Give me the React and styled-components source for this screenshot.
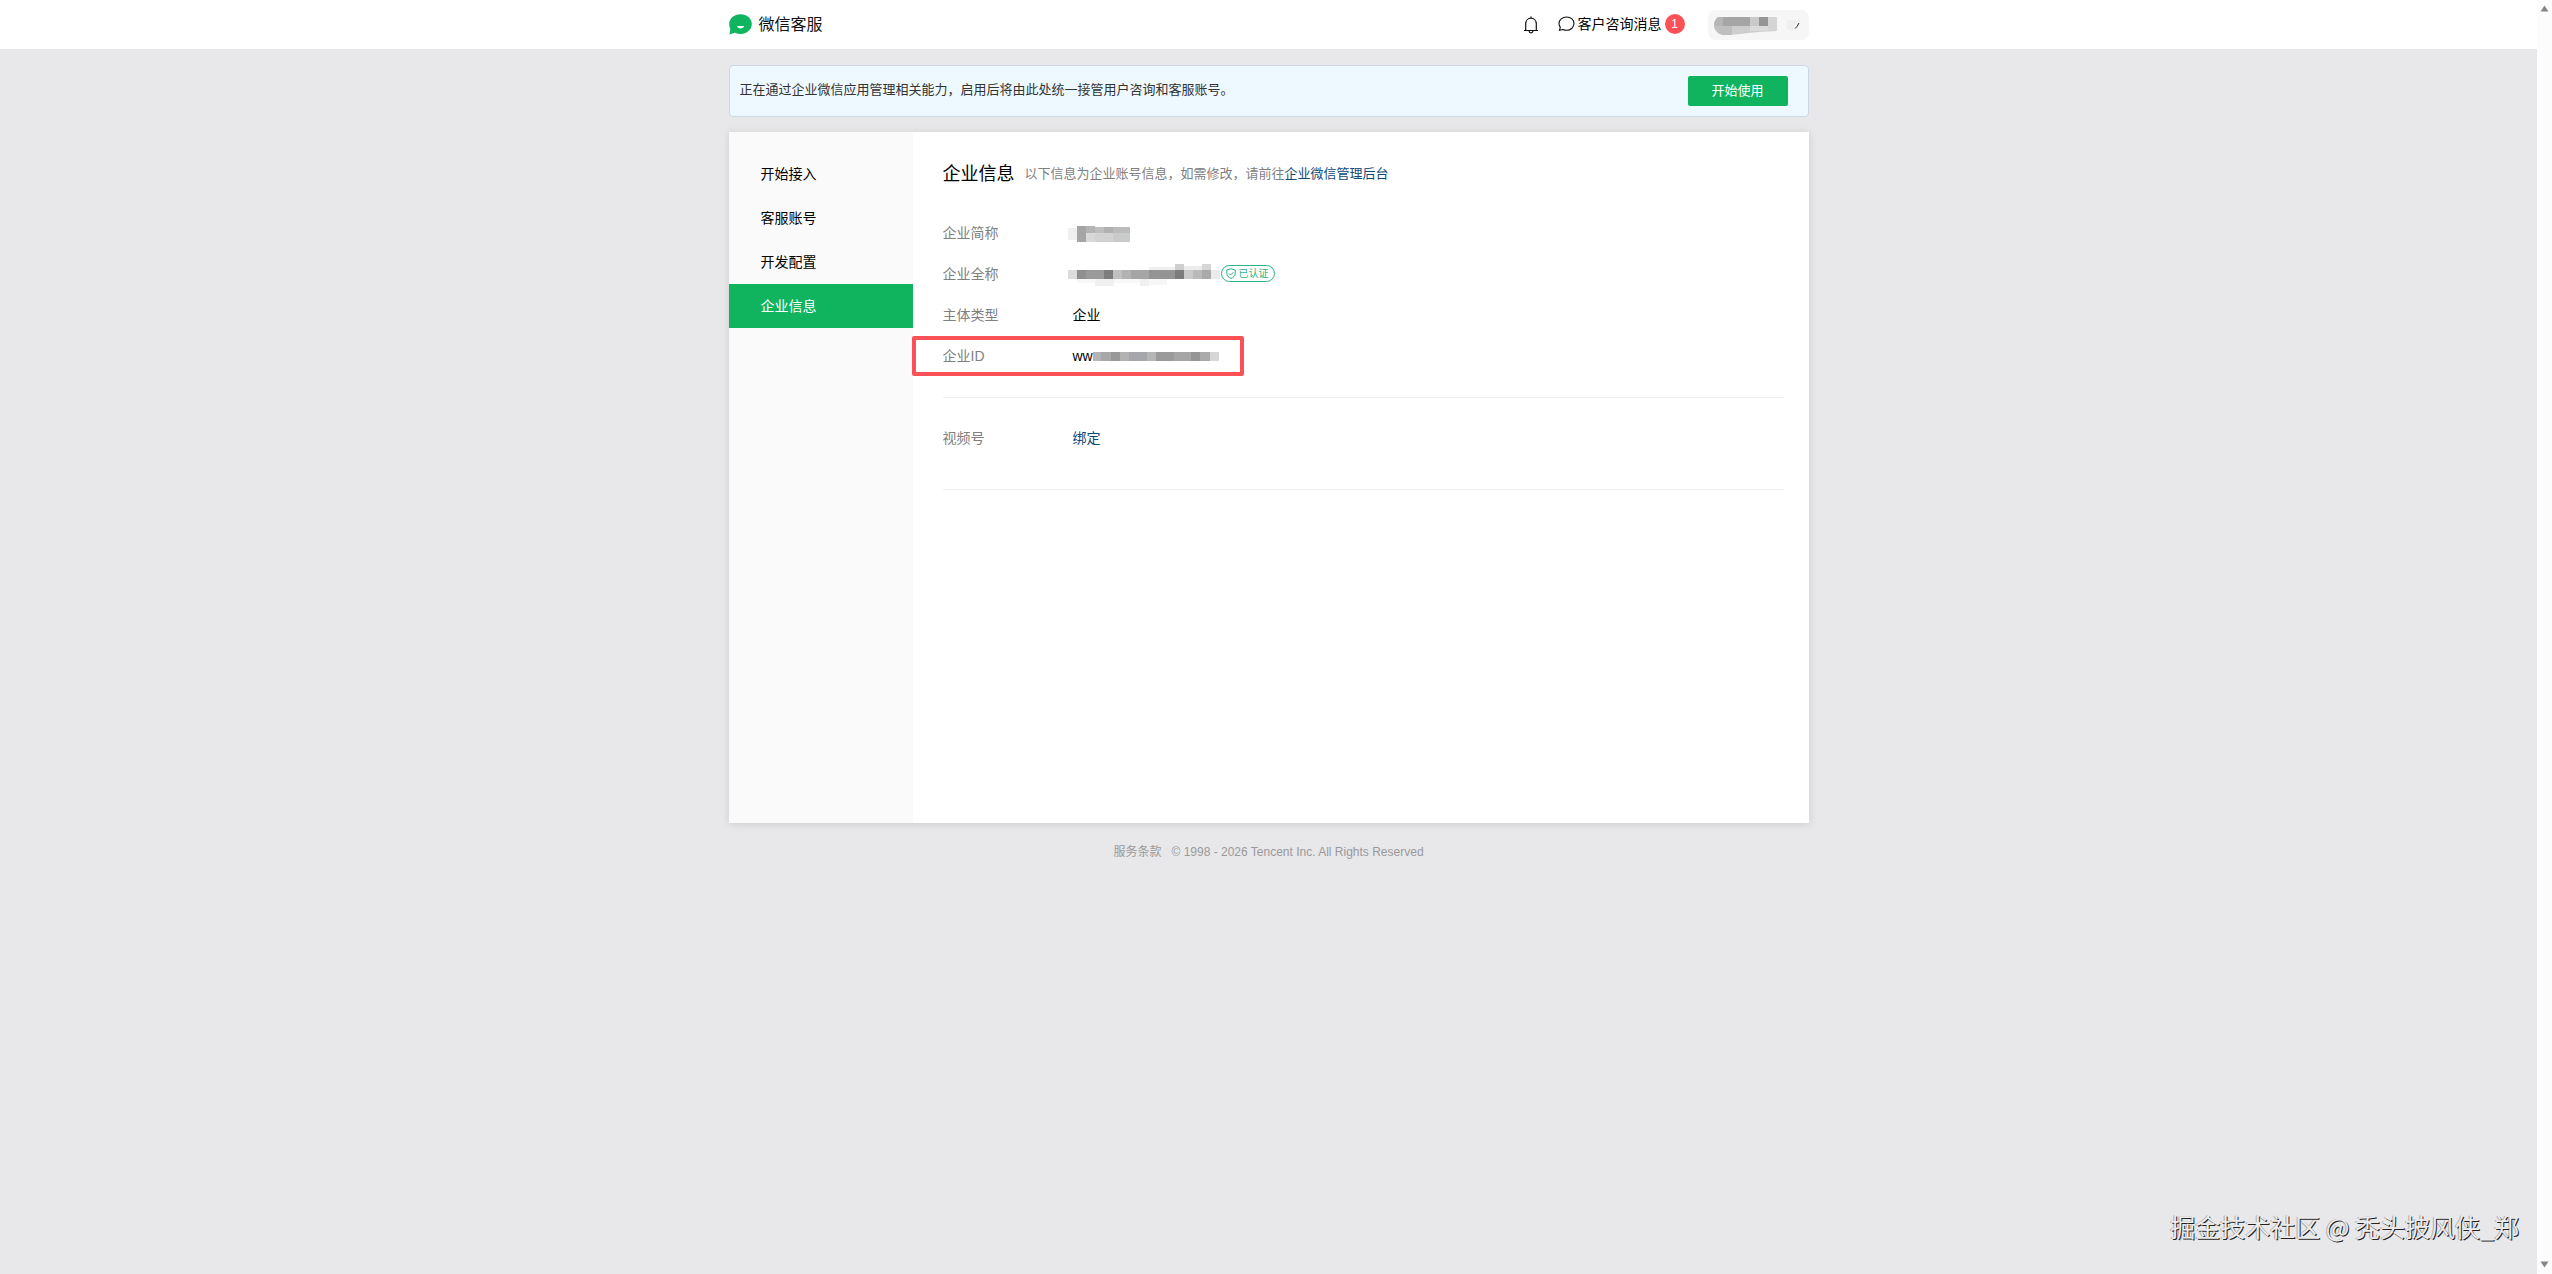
import React from 'react';
import styled, { createGlobalStyle } from 'styled-components';

const GlobalStyle = createGlobalStyle`
  * {
    box-sizing: border-box;
  }

  body {
    margin: 0;
    background-color: #e8e8ea;
    color: #000;
    font-family: 'Liberation Sans', 'Noto Sans CJK SC', sans-serif;
    font-size: 14px;
    line-height: 20px;
  }
`;

const Window = styled.div`
  display: flex;
  min-height: 100vh;
`;

const Page = styled.div`
  flex: 1;
  min-width: 0;
  position: relative;
`;

const ScrollTrack = styled.div`
  width: 15px;
  display: flex;
  flex-direction: column;
  justify-content: space-between;
  align-items: center;
  padding: 5px 0 6px;
  background-color: #fcfcfc;
`;

const Container = styled.div`
  width: 100%;
  max-width: 1080px;
  margin: 0 auto;
`;

const Header = styled.header`
  background-color: #fff;
`;

const HeaderInner = styled(Container)`
  display: flex;
  align-items: center;
  justify-content: space-between;
  height: 49px;
`;

const Brand = styled.a`
  display: flex;
  align-items: center;
  gap: 7px;
  color: #111;
  font-size: 16px;
  line-height: 22px;
  text-decoration: none;
`;

const HeaderActions = styled.div`
  display: flex;
  align-items: center;
`;

const IconButton = styled.button`
  display: flex;
  padding: 0;
  margin-right: 19px;
  border: none;
  background: none;
  cursor: pointer;
`;

const MessageLink = styled.a`
  display: flex;
  align-items: center;
  gap: 3px;
  margin-right: 23px;
  padding-bottom: 1px;
  color: #000;
  text-decoration: none;
`;

const Badge = styled.span`
  width: 20px;
  height: 20px;
  border-radius: 50%;
  background-color: #fa5157;
  color: #fff;
  font-size: 12px;
  text-align: center;
`;

const AccountButton = styled.button`
  display: flex;
  align-items: center;
  justify-content: space-between;
  width: 101px;
  height: 30px;
  padding: 2px 8px 0 6px;
  border: none;
  border-radius: 8px;
  background-color: #f6f6f6;
  cursor: pointer;
`;

const Notice = styled.div`
  display: flex;
  align-items: center;
  justify-content: space-between;
  height: 52px;
  margin: 16px 0 15px;
  padding: 0 20px 0 10px;
  border: 1px solid #cbd8e6;
  border-radius: 4px;
  background-color: #edf8ff;
  color: #333;
  font-size: 13px;
`;

const NoticeText = styled.span`
  padding-bottom: 2px;
`;

const StartButton = styled.button`
  width: 100px;
  height: 30px;
  padding: 0 0 3px;
  border: none;
  border-radius: 2px;
  background-color: #10b45f;
  color: #fff;
  font-family: inherit;
  font-size: 13px;
  cursor: pointer;
`;

const Card = styled.div`
  display: flex;
  min-height: 691px;
  background-color: #fff;
  box-shadow: 0 1px 8px rgba(0, 0, 0, 0.12);
`;

const Sidebar = styled.nav`
  width: 184px;
  padding-top: 20px;
  background-color: #fafafa;
`;

const NavItem = styled.a`
  display: block;
  padding: 0 32px;
  background-color: ${({ $active }) => ($active ? '#10b45f' : 'transparent')};
  color: ${({ $active }) => ($active ? '#fff' : '#000')};
  line-height: 44px;
  text-decoration: none;
`;

const Content = styled.main`
  flex: 1;
  padding: 28px 25px 0 30px;
`;

const TitleRow = styled.div`
  display: flex;
  align-items: center;
  gap: 10px;
  height: 28px;
  margin-bottom: 25px;
`;

const Title = styled.h1`
  margin: 0;
  font-size: 18px;
  font-weight: 400;
`;

const Hint = styled.span`
  color: #808080;
  font-size: 13px;
`;

const Link = styled.a`
  color: #0d4a7a;
  text-decoration: none;
`;

const InfoList = styled.dl`
  margin: 0;
  padding-bottom: ${({ $bottom }) => $bottom}px;
  border-bottom: 1px solid #f0f0f0;
`;

const InfoRow = styled.div`
  position: relative;
  display: flex;
  align-items: center;
  height: 41px;
  padding-bottom: 2px;
`;

const Term = styled.dt`
  width: 130px;
  color: #808080;
`;

const Value = styled.dd`
  display: flex;
  align-items: center;
  margin: 0;
`;

/* Frame drawn over the row, reaching past the content padding */
const Highlight = styled.span`
  position: absolute;
  top: 0;
  left: -31px;
  width: 332px;
  height: 40px;
  border: 4px solid #fa5157;
  border-radius: 2px;
  pointer-events: none;
`;

const Verified = styled.span`
  display: flex;
  align-items: center;
  gap: 3px;
  height: 17px;
  padding: 0 5px 0 4px;
  border: 1px solid #2bb583;
  border-radius: 9px;
  color: #2bb583;
  font-size: 10px;
`;

const Section = styled.div`
  padding-top: 20px;
`;

const Footer = styled.footer`
  display: flex;
  justify-content: center;
  gap: 10px;
  padding: 19px 0;
  color: #999;
  font-size: 12px;
`;

const FooterLink = styled.a`
  color: inherit;
  text-decoration: none;
`;

const Watermark = styled.div`
  position: absolute;
  right: 18px;
  bottom: 30px;
  color: #ececee;
  font-family: 'Noto Sans CJK SC', sans-serif;
  font-size: 25px;
  line-height: 36px;
  text-shadow: 1px 1px 0 #222, -1px 0 0 #aaa;
`;

const Pixels = styled.svg`
  display: block;
  margin: ${({ $inset }) => ($inset ? '2px 0 0 -5px' : '2px 0 0')};
`;

// Blurred-out text: each cell is [x, y, width, height, colour]
const Mosaic = ({ width, height, cells, inset }) => (
  <Pixels width={width} height={height} $inset={inset} shapeRendering="crispEdges" aria-hidden="true">
    {cells.map(([x, y, w, h, fill], i) => (
      <rect key={i} x={x} y={y} width={w} height={h} fill={fill} />
    ))}
  </Pixels>
);

const shortName = [
  [0, 2, 9, 12, '#efefef'],
  [9, 0, 9, 16, '#a5a5a5'],
  [18, 0, 9, 7, '#b4b4b4'],
  [27, 1, 9, 6, '#bebebe'],
  [36, 1, 9, 6, '#b0b0b0'],
  [45, 1, 17, 6, '#bcbcbc'],
  [18, 7, 9, 9, '#d8d8d8'],
  [27, 7, 18, 9, '#d2d2d2'],
  [45, 7, 17, 9, '#c9cbcb'],
];

const fullName = [
  [0, 7, 9, 9, '#dcdcdc'],
  [9, 7, 9, 9, '#8f8f8f'],
  [18, 7, 18, 9, '#9a9a9a'],
  [36, 7, 9, 9, '#7c7c7c'],
  [45, 7, 9, 9, '#c0c0c0'],
  [54, 7, 9, 9, '#b2b2b2'],
  [63, 7, 18, 9, '#a5a5a5'],
  [81, 7, 26, 9, '#949494'],
  [81, 4, 26, 3, '#f0f0f0'],
  [107, 1, 9, 6, '#cecece'],
  [107, 7, 9, 9, '#7c7c7c'],
  [116, 3, 18, 4, '#ececec'],
  [116, 7, 9, 9, '#cacaca'],
  [125, 7, 9, 9, '#bababa'],
  [134, 1, 9, 6, '#d6d6d6'],
  [134, 7, 9, 9, '#aaa'],
  [143, 7, 9, 9, '#ebebeb'],
  [9, 16, 18, 4, '#f7f7f7'],
  [27, 16, 19, 7, '#f0f0f0'],
  [46, 16, 26, 4, '#f8f8f8'],
  [72, 16, 9, 7, '#f0f0f0'],
  [81, 16, 18, 6, '#f6f6f6'],
];

const corpId = [
  [0, 0, 8, 9, '#b4b4b4'],
  [8, 0, 10, 9, '#a8a8a8'],
  [18, 0, 9, 9, '#999'],
  [27, 0, 9, 9, '#b2b2b2'],
  [36, 0, 18, 9, '#a6a7aa'],
  [54, 0, 9, 9, '#b6b6b6'],
  [63, 0, 18, 9, '#9a9a9a'],
  [81, 0, 17, 9, '#a5a5a5'],
  [98, 0, 9, 9, '#959595'],
  [107, 0, 10, 9, '#aaa'],
  [117, 0, 9, 9, '#d6d6d6'],
];

const LogoIcon = () => (
  <svg width="23" height="21" viewBox="0 0 23 21" aria-hidden="true">
    <path d="M11.500 0.300C18 0.300 22.800 4.500 22.800 10.100S18 20 11.500 20C9.500 20 7.600 19.600 5.900 18.800C4.500 19.200 2.400 19.900 0.300 20.400C0.900 18.600 1.200 16.500 1.300 15.200C0.600 13.700 0.200 12 0.200 10.100C0.200 4.500 5 0.300 11.500 0.300Z" fill="#10b45f" />
    <path d="M8 12H15.200C14.700 13.600 13.400 14.500 11.600 14.500S8.500 13.600 8 12Z" fill="#fff" />
  </svg>
);

const BellIcon = () => (
  <svg width="16" height="18" viewBox="0 0 16 18" fill="none" stroke="#111" strokeWidth="1.200" aria-hidden="true">
    <path d="M8 0.500V2M1 14.500H15M2.700 14.500V8C2.700 4.500 5 2.200 8 2.200S13.300 4.500 13.300 8V14.500" />
    <path d="M6 15C6.200 16.300 7 16.900 8 16.900S9.800 16.300 10 15" />
  </svg>
);

const ChatIcon = () => (
  <svg width="17" height="16" viewBox="0 0 17 16" fill="none" stroke="#111" strokeWidth="1.100" aria-hidden="true">
    <path d="M8.700 1C13 1 16 3.900 16 7.500S13 14.300 8.700 14.300C7.400 14.300 6.100 14 5 13.500L1.500 14.300L2.300 11.200C1.500 10.200 1 8.900 1 7.500C1 3.900 4.300 1 8.700 1Z" />
  </svg>
);

const ShieldIcon = () => (
  <svg width="10" height="11" viewBox="0 0 10 11" fill="none" stroke="#2bb583" strokeWidth="1" aria-hidden="true">
    <path d="M5 0.700L9.200 2V5.500C9.200 8 7.400 9.500 5 10.400C2.600 9.500 0.800 8 0.800 5.500V2Z" />
    <path d="M2.900 5.400L4.500 7L7.300 4.200" />
  </svg>
);

const AccountName = () => (
  <svg width="63" height="18" viewBox="0 0 63 18" aria-hidden="true">
    <clipPath id="account-shape">
      <path d="M4 0H63V14L44 15L16 18H9C4 17 0 13 0 8C0 4 2 2 4 0Z" />
    </clipPath>
    <g clipPath="url(#account-shape)" shapeRendering="crispEdges">
      <rect width="63" height="18" fill="#cdcdcd" />
      <rect width="9" height="9" fill="#b5b5b5" />
      <rect x="9" width="27" height="9" fill="#a5a5a5" />
      <rect x="36" width="9" height="9" fill="#cacaca" />
      <rect x="45" width="9" height="9" fill="#949494" />
      <rect x="54" width="9" height="14" fill="#d4d4d4" />
      <rect y="9" width="18" height="9" fill="#bfbfbf" />
      <rect x="36" y="9" width="18" height="5" fill="#dadada" />
    </g>
  </svg>
);

const AccountArrow = () => (
  <svg width="16" height="14" viewBox="0 0 16 14" aria-hidden="true">
    <path d="M2 1H12L7 13L2 10Z" fill="#efefef" />
    <path d="M14 4L12 7.500L10 9.500" stroke="#222" fill="none" />
  </svg>
);

const ScrollArrow = ({ down }) => (
  <svg width="9" height="7" viewBox="0 0 9 7" aria-hidden="true">
    <path d={down ? 'M0.500 0.500H8.500L4.500 6.500Z' : 'M0.500 6.500H8.500L4.500 0.500Z'} fill="#858585" />
  </svg>
);

const navItems = ['开始接入', '客服账号', '开发配置', '企业信息'];

const App = () => (
  <>
    <GlobalStyle />
    <Window>
      <Page>
        <Header>
          <HeaderInner>
            <Brand href="#">
              <LogoIcon />
              微信客服
            </Brand>
            <HeaderActions>
              <IconButton aria-label="通知">
                <BellIcon />
              </IconButton>
              <MessageLink href="#">
                <ChatIcon />
                客户咨询消息
                <Badge>1</Badge>
              </MessageLink>
              <AccountButton aria-label="账号">
                <AccountName />
                <AccountArrow />
              </AccountButton>
            </HeaderActions>
          </HeaderInner>
        </Header>
        <Container>
          <Notice>
            <NoticeText>正在通过企业微信应用管理相关能力，启用后将由此处统一接管用户咨询和客服账号。</NoticeText>
            <StartButton>开始使用</StartButton>
          </Notice>
          <Card>
            <Sidebar>
              {navItems.map((item) => (
                <NavItem key={item} href="#" $active={item === '企业信息'}>
                  {item}
                </NavItem>
              ))}
            </Sidebar>
            <Content>
              <TitleRow>
                <Title>企业信息</Title>
                <Hint>
                  以下信息为企业账号信息，如需修改，请前往<Link href="#">企业微信管理后台</Link>
                </Hint>
              </TitleRow>
              <InfoList $bottom={20}>
                <InfoRow>
                  <Term>企业简称</Term>
                  <Value>
                    <Mosaic width={62} height={16} cells={shortName} inset />
                  </Value>
                </InfoRow>
                <InfoRow>
                  <Term>企业全称</Term>
                  <Value>
                    <Mosaic width={153} height={23} cells={fullName} inset />
                    <Verified>
                      <ShieldIcon />
                      已认证
                    </Verified>
                  </Value>
                </InfoRow>
                <InfoRow>
                  <Term>主体类型</Term>
                  <Value>企业</Value>
                </InfoRow>
                <InfoRow>
                  <Term>企业ID</Term>
                  <Value>
                    ww
                    <Mosaic width={126} height={9} cells={corpId} />
                  </Value>
                  <Highlight />
                </InfoRow>
              </InfoList>
              <Section>
                <InfoList $bottom={30}>
                  <InfoRow>
                    <Term>视频号</Term>
                    <Value>
                      <Link href="#">绑定</Link>
                    </Value>
                  </InfoRow>
                </InfoList>
              </Section>
            </Content>
          </Card>
          <Footer>
            <FooterLink href="#">服务条款</FooterLink>
            <span>© 1998 - 2026 Tencent Inc. All Rights Reserved</span>
          </Footer>
        </Container>
        <Watermark>掘金技术社区 @ 秃头披风侠_郑</Watermark>
      </Page>
      <ScrollTrack>
        <ScrollArrow />
        <ScrollArrow down />
      </ScrollTrack>
    </Window>
  </>
);

export default App;
